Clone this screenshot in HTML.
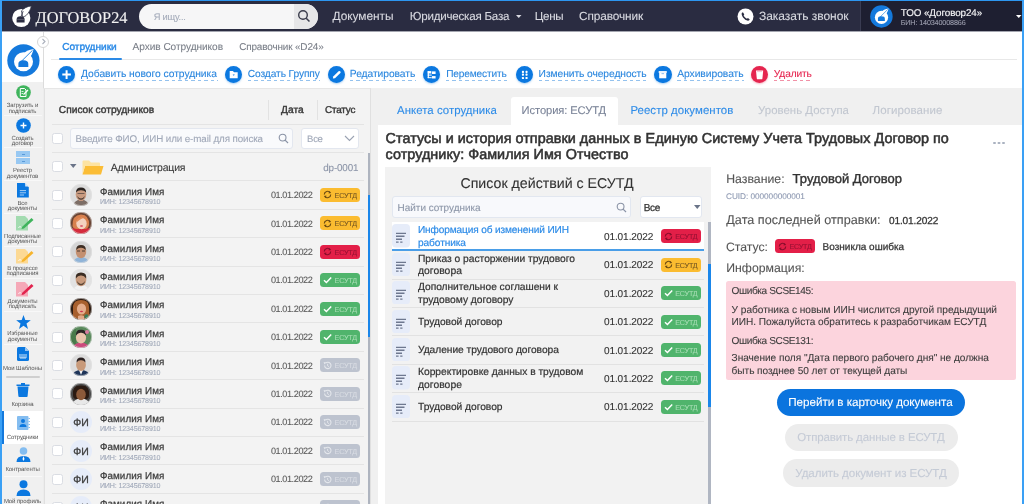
<!DOCTYPE html>
<html><head><meta charset="utf-8">
<style>
*{box-sizing:border-box;margin:0;padding:0}
html,body{width:1024px;height:504px;overflow:hidden;background:#fff}
body{font-family:"Liberation Sans",sans-serif;position:relative;color:#333}
.a{position:absolute}
.t{position:absolute;white-space:nowrap;line-height:1;text-rendering:geometricPrecision}
#w{position:absolute;left:0;top:0;width:1024px;height:504px;overflow:hidden;will-change:transform}
</style></head>
<body>
<div id="w">
<div class="a" style="left:0px;top:0px;width:1024px;height:31.5px;background:#2a2c41;"></div>
<div class="a" style="left:860px;top:0px;width:164px;height:31.5px;background:#1e1f31;border-left:1px solid #3a3c52;"></div>
<div class="a" style="left:0px;top:31px;width:1024px;height:1px;background:#a4a6b0;"></div>
<svg class="a" style="left:10px;top:4px" width="24" height="25" viewBox="0 0 24 25">
  <circle cx="11.3" cy="14" r="9.1" fill="#fff"/>
  <path d="M11.5 6.8 C14 4 17.5 2.2 21.4 1.9 C20.6 5.2 19.2 8.6 16.2 11.4 C15 12.4 13.6 12.8 12.6 12.8 Z" fill="#fff" stroke="#2a2c41" stroke-width="0.8"/>
  <path d="M11 12.6 L13.2 7.2" stroke="#2a2c41" stroke-width="0.8"/>
  <path d="M6.6 18.6 V15.4 Q6.6 12.2 10.6 12.2 Q14.6 12.2 14.6 15.4 V18.6 Z" fill="#2a2c41"/>
  <path d="M7.2 15.6 H14" stroke="#fff" stroke-width="0.4" opacity="0.5"/>
</svg>
<div class="t" style="left:35.60px;top:9.50px;font-size:16.38px;color:#f2f2f2;letter-spacing:-0.015px;font-family:'Liberation Serif',serif;-webkit-text-stroke-width:0.1px;">ДОГОВОР24</div>
<div class="a" style="left:139.4px;top:3.9px;width:178.6px;height:24.7px;border-radius:12.4px;background:#f6f6f7;overflow:hidden"><div class="a" style="left:155px;top:0;width:24px;height:25px;background:#e6e6e8"></div></div>
<div class="t" style="left:153.75px;top:13.00px;font-size:9.31px;color:#a6adbb;letter-spacing:-0.220px;-webkit-text-stroke-width:0.1px;">Я ищу...</div>
<svg class="a" style="left:297px;top:9px" width="14" height="14" viewBox="0 0 14 14">
  <circle cx="6" cy="6" r="4.3" fill="none" stroke="#3a3c4c" stroke-width="1.4"/>
  <path d="M9.2 9.2 L12.5 12.5" stroke="#3a3c4c" stroke-width="1.5"/>
</svg>
<div class="t" style="left:332.50px;top:11.40px;font-size:11.92px;color:#d9dae1;letter-spacing:-0.050px;-webkit-text-stroke-width:0.1px;">Документы</div>
<div class="t" style="left:409.80px;top:12.40px;font-size:11.59px;color:#d9dae1;letter-spacing:-0.225px;-webkit-text-stroke-width:0.1px;">Юридическая База</div>
<svg class="a" style="left:516px;top:14.5px" width="6" height="4"><path d="M0 0 L5.5 0 L2.75 3Z" fill="#d9dae1"/></svg>
<div class="t" style="left:534.70px;top:12.40px;font-size:11.59px;color:#d9dae1;letter-spacing:-0.263px;-webkit-text-stroke-width:0.1px;">Цены</div>
<div class="t" style="left:579.00px;top:11.40px;font-size:11.84px;color:#d9dae1;letter-spacing:-0.092px;-webkit-text-stroke-width:0.1px;">Справочник</div>
<svg class="a" style="left:737px;top:8px" width="17" height="17" viewBox="0 0 17 17">
  <circle cx="8.5" cy="8.5" r="8" fill="#fff"/>
  <path d="M5.2 4.6 C4.6 5.2 4.4 6.3 5.2 7.9 C6.1 9.8 7.8 11.5 9.6 12.3 C10.9 12.9 11.9 12.6 12.5 12 L12.6 11.3 L10.9 10.1 L10 10.8 C9 10.4 7.1 8.6 6.6 7.4 L7.3 6.5 L6.1 4.6 Z" fill="#2a2c41"/>
</svg>
<div class="t" style="left:759.00px;top:11.40px;font-size:11.97px;color:#d9dae1;letter-spacing:-0.014px;-webkit-text-stroke-width:0.1px;">Заказать звонок</div>
<svg class="a" style="left:870.3px;top:4.7px" width="23" height="23" viewBox="0 0 33 33">
  <circle cx="16.4" cy="16.4" r="16.1" fill="#1479dc"/>
  <circle cx="16.5" cy="17.8" r="9.5" fill="#fff"/>
  <path d="M15.5 10.5 C18 7.5 22 5.5 26.6 5 C25.8 8.5 24.5 12 21.5 15 C20 16.2 18.5 16.5 17.5 16.5 Z" fill="#fff"/>
  <path d="M14.2 17.5 L25.6 6.2" stroke="#1479dc" stroke-width="0.9"/>
  <path d="M11.4 22.9 V19.8 Q11.4 16.3 16.35 16.3 Q21.3 16.3 21.3 19.8 V22.9 Z" fill="#1479dc"/>
</svg>
<div class="t" style="left:900.70px;top:8.60px;font-size:9.85px;color:#f4f4f6;letter-spacing:-0.083px;-webkit-text-stroke-width:0.15000000000000002px;">ТОО «Договор24»</div>
<div class="t" style="left:900.70px;top:20.00px;font-size:7.18px;color:#9c9eae;letter-spacing:-0.116px;-webkit-text-stroke-width:0.1px;">БИН: 140340008866</div>
<svg class="a" style="left:1015.5px;top:15px" width="6" height="4"><path d="M0 0 L5.5 0 L2.75 3Z" fill="#fff"/></svg>
<div class="a" style="left:2px;top:32px;width:41px;height:472px;background:#f0f0f0;"></div>
<div class="a" style="left:2px;top:32px;width:41px;height:49.5px;background:#fff;"></div>
<div class="a" style="left:42.5px;top:32px;width:1px;height:472px;background:#dcdcdc;"></div>
<div class="a" style="left:37px;top:35.5px;width:12px;height:12px;border-radius:50%;background:#fff;border:1px solid #d6d6d6"></div>
<svg class="a" style="left:40.5px;top:38px" width="6" height="7"><path d="M1.5 1 L4 3.5 L1.5 6" fill="none" stroke="#aab0bc" stroke-width="1.1"/></svg>
<svg class="a" style="left:6.5px;top:43.5px" width="33" height="33" viewBox="0 0 33 33">
  <circle cx="16.4" cy="16.4" r="16.1" fill="#1479dc"/>
  <circle cx="16.5" cy="17.8" r="9.5" fill="#fff"/>
  <path d="M15.5 10.5 C18 7.5 22 5.5 26.6 5 C25.8 8.5 24.5 12 21.5 15 C20 16.2 18.5 16.5 17.5 16.5 Z" fill="#fff"/>
  <path d="M14.2 17.5 L25.6 6.2" stroke="#1479dc" stroke-width="0.9"/>
  <path d="M11.4 22.9 V19.8 Q11.4 16.3 16.35 16.3 Q21.3 16.3 21.3 19.8 V22.9 Z" fill="#1479dc"/>
</svg>
<svg class="a" style="left:15.5px;top:85px" width="15" height="15" viewBox="0 0 15 15"><circle cx="7.5" cy="7.5" r="7.3" fill="#3fb45c"/><path d="M4.3 3.5 H8.5 L10 5 V11.5 H4.3 Z" fill="none" stroke="#fff" stroke-width="1"/><path d="M7.5 9.5 L12 5" stroke="#fff" stroke-width="1.2"/><path d="M5.5 8.5 H7 M5.5 6.5 H7.5" stroke="#fff" stroke-width="0.8"/></svg>
<div class="t" style="left:2px;width:41px;text-align:center;top:102.9px;font-size:6px;color:#555;letter-spacing:-0.1px">Загрузить и</div>
<div class="t" style="left:2px;width:41px;text-align:center;top:108.5px;font-size:6px;color:#555;letter-spacing:-0.1px">подписать</div>
<div class="a" style="left:4px;top:114.5px;width:38px;height:1px;background:#f8f8f8"></div>
<svg class="a" style="left:15.8px;top:118.4px" width="15" height="15" viewBox="0 0 15 15"><circle cx="7.5" cy="7.5" r="7.3" fill="#0b78e0"/><path d="M7.5 4.5 V10.5 M4.5 7.5 H10.5" stroke="#fff" stroke-width="1.4"/></svg>
<div class="t" style="left:2px;width:41px;text-align:center;top:135.9px;font-size:6px;color:#555;letter-spacing:-0.1px">Создать</div>
<div class="t" style="left:2px;width:41px;text-align:center;top:141.1px;font-size:6px;color:#555;letter-spacing:-0.1px">договор</div>
<div class="a" style="left:4px;top:147px;width:38px;height:1px;background:#f8f8f8"></div>
<div class="a" style="left:16px;top:151px;width:14px;height:6.3px;background:#98c8f2;"></div>
<div class="a" style="left:16px;top:158.2px;width:14px;height:6.3px;background:#98c8f2;"></div>
<div class="a" style="left:21.5px;top:153.6px;width:3px;height:1px;background:#5a9ad8;"></div>
<div class="a" style="left:21.5px;top:160.8px;width:3px;height:1px;background:#5a9ad8;"></div>
<div class="t" style="left:2px;width:41px;text-align:center;top:168.2px;font-size:6px;color:#555;letter-spacing:-0.1px">Реестр</div>
<div class="t" style="left:2px;width:41px;text-align:center;top:173.7px;font-size:6px;color:#555;letter-spacing:-0.1px">документов</div>
<div class="a" style="left:4px;top:180px;width:38px;height:1px;background:#f8f8f8"></div>
<svg class="a" style="left:17px;top:183.4px" width="12" height="14.5" viewBox="0 0 12 14.5"><path d="M0 0 H7.6 L11.8 4.2 V14.5 H0 Z" fill="#0b78e0"/><path d="M8.2 0 L11.8 3.6 H8.2 Z" fill="#d6e8fa"/><path d="M2.8 7.6 H9 M2.8 9.8 H9 M2.8 12 H7" stroke="#cfe3f8" stroke-width="0.8" fill="none"/></svg>
<div class="t" style="left:2px;width:41px;text-align:center;top:200.9px;font-size:6px;color:#555;letter-spacing:-0.1px">Все</div>
<div class="t" style="left:2px;width:41px;text-align:center;top:206.4px;font-size:6px;color:#555;letter-spacing:-0.1px">документы</div>
<div class="a" style="left:4px;top:213px;width:38px;height:1px;background:#f8f8f8"></div>
<svg class="a" style="left:15.5px;top:216px" width="18" height="15" viewBox="0 0 18 15"><path d="M0 0 H9 L12 3 V14.5 H0 Z" fill="#a3dbb0"/><path d="M6 11 L15.5 2 L17.5 4 L8 12.5 L5.5 13 Z" fill="#3fb45c"/><path d="M2.5 12 C3.5 10 4.5 10 5 11.5" stroke="#fff" stroke-width="0.8" fill="none"/></svg>
<div class="t" style="left:2px;width:41px;text-align:center;top:233.9px;font-size:6px;color:#555;letter-spacing:-0.1px">Подписанные</div>
<div class="t" style="left:2px;width:41px;text-align:center;top:239.1px;font-size:6px;color:#555;letter-spacing:-0.1px">документы</div>
<div class="a" style="left:4px;top:246px;width:38px;height:1px;background:#f8f8f8"></div>
<svg class="a" style="left:15.5px;top:249px" width="18" height="15" viewBox="0 0 18 15"><path d="M0 0 H9 L12 3 V14.5 H0 Z" fill="#fcd994"/><path d="M6 11 L15.5 2 L17.5 4 L8 12.5 L5.5 13 Z" fill="#f6b42c"/><path d="M2.5 12 C3.5 10 4.5 10 5 11.5" stroke="#fff" stroke-width="0.8" fill="none"/></svg>
<div class="t" style="left:2px;width:41px;text-align:center;top:266.2px;font-size:6px;color:#555;letter-spacing:-0.1px">В процессе</div>
<div class="t" style="left:2px;width:41px;text-align:center;top:271.2px;font-size:6px;color:#555;letter-spacing:-0.1px">подписания</div>
<div class="a" style="left:4px;top:277.5px;width:38px;height:1px;background:#f8f8f8"></div>
<svg class="a" style="left:15.5px;top:281.5px" width="18" height="15" viewBox="0 0 18 15"><path d="M0 0 H9 L12 3 V14.5 H0 Z" fill="#f5a9b8"/><path d="M6 11 L15.5 2 L17.5 4 L8 12.5 L5.5 13 Z" fill="#e2244e"/><path d="M2.5 12 C3.5 10 4.5 10 5 11.5" stroke="#fff" stroke-width="0.8" fill="none"/></svg>
<div class="t" style="left:2px;width:41px;text-align:center;top:298.5px;font-size:6px;color:#555;letter-spacing:-0.1px">Документы</div>
<div class="t" style="left:2px;width:41px;text-align:center;top:304.1px;font-size:6px;color:#555;letter-spacing:-0.1px">подписать</div>
<div class="a" style="left:4px;top:310.5px;width:38px;height:1px;background:#f8f8f8"></div>
<svg class="a" style="left:15.5px;top:314.5px" width="15" height="14.5" viewBox="0 0 15 14.5"><path d="M7.5 0 L9.3 5 L14.8 5.2 L10.5 8.5 L12 14 L7.5 10.8 L3 14 L4.5 8.5 L0.2 5.2 L5.7 5 Z" fill="#0b78e0"/></svg>
<div class="t" style="left:2px;width:41px;text-align:center;top:331.3px;font-size:6px;color:#555;letter-spacing:-0.1px">Избранные</div>
<div class="t" style="left:2px;width:41px;text-align:center;top:336.9px;font-size:6px;color:#555;letter-spacing:-0.1px">документы</div>
<div class="a" style="left:4px;top:343.5px;width:38px;height:1px;background:#f8f8f8"></div>
<svg class="a" style="left:17px;top:347px" width="12" height="14" viewBox="0 0 12 14"><path d="M0 1.5 Q0 0 1.5 0 H8 L12 4 V12.5 Q12 14 10.5 14 H1.5 Q0 14 0 12.5 Z" fill="#0b78e0"/><path d="M8 0 V4 H12" fill="#9cc7f2"/><path d="M3 7 V11 H9 V7 M5 7 V11 M7 7 V11" stroke="#fff" stroke-width="0.8" fill="none"/></svg>
<div class="t" style="left:2px;width:41px;text-align:center;top:366.2px;font-size:6px;color:#555;letter-spacing:-0.1px">Мои Шаблоны</div>
<div class="a" style="left:6px;top:376px;width:34px;height:2px;background:#cfcfcf;border-radius:1px"></div>
<svg class="a" style="left:16px;top:382.5px" width="14" height="14" viewBox="0 0 14 14"><path d="M0.5 1.5 H13.5 V3 H0.5 Z M5 0 H9 V1.5 H5 Z" fill="#0b78e0"/><path d="M1.5 3.6 H12.5 L11.6 13.2 Q11.5 14 10.7 14 H3.3 Q2.5 14 2.4 13.2 Z" fill="#0b78e0"/></svg>
<div class="t" style="left:2px;width:41px;text-align:center;top:401.9px;font-size:6px;color:#555;letter-spacing:-0.1px">Корзина</div>
<div class="a" style="left:2px;top:410.7px;width:40.5px;height:33px;background:#fff;"></div>
<div class="a" style="left:2px;top:410.7px;width:2px;height:33px;background:#1479dc;"></div>
<svg class="a" style="left:17px;top:415.5px" width="14" height="14" viewBox="0 0 14 14"><rect x="0" y="0" width="11.5" height="14" rx="1" fill="#84bdf0"/><path d="M11.5 2.5 H13 M11.5 5.5 H13 M11.5 8.5 H13 M11.5 11.5 H13" stroke="#84bdf0" stroke-width="1.2"/><circle cx="6" cy="5" r="2" fill="#0b78e0"/><path d="M2.5 11 Q2.5 8 6 8 Q9.5 8 9.5 11 Z" fill="#0b78e0"/></svg>
<div class="t" style="left:2px;width:41px;text-align:center;top:434.5px;font-size:6px;color:#555;letter-spacing:-0.1px">Сотрудники</div>
<svg class="a" style="left:15.5px;top:446.5px" width="15" height="15" viewBox="0 0 15 15"><circle cx="7.5" cy="4" r="3.8" fill="#84bdf0"/><path d="M0.5 15 Q0.5 9 7.5 9 Q14.5 9 14.5 15 Z" fill="#0b78e0"/><path d="M7.5 9 L6.5 12 L7.5 14 L8.5 12 Z" fill="#fff"/></svg>
<div class="t" style="left:2px;width:41px;text-align:center;top:466.6px;font-size:6px;color:#555;letter-spacing:-0.1px">Контрагенты</div>
<div class="a" style="left:4px;top:475.5px;width:38px;height:1px;background:#f8f8f8"></div>
<svg class="a" style="left:15.5px;top:480px" width="15" height="16" viewBox="0 0 15 16"><circle cx="7.5" cy="4.2" r="4" fill="#0b78e0"/><path d="M0.5 16 Q0.5 9.5 7.5 9.5 Q14.5 9.5 14.5 16 Z" fill="#0b78e0"/></svg>
<div class="t" style="left:2px;width:41px;text-align:center;top:499.4px;font-size:6px;color:#555;letter-spacing:-0.1px">Мой профиль</div>
<div class="t" style="left:62.20px;top:43.00px;font-size:10.13px;color:#2b8ae6;letter-spacing:-0.037px;-webkit-text-stroke-width:0.4px;">Сотрудники</div>
<div class="t" style="left:132.60px;top:43.00px;font-size:10.11px;color:#7a7f88;letter-spacing:-0.050px;-webkit-text-stroke-width:0.1px;">Архив Сотрудников</div>
<div class="t" style="left:239.20px;top:43.00px;font-size:9.94px;color:#7a7f88;letter-spacing:-0.139px;-webkit-text-stroke-width:0.1px;">Справочник «D24»</div>
<div class="a" style="left:51px;top:59px;width:966px;height:1px;background:#e8e8e8;"></div>
<div class="a" style="left:58.5px;top:58.3px;width:63px;height:2px;background:#2b8ae6;border-radius:1px;"></div>
<div class="a" style="left:58.1px;top:65.7px;width:17.2px;height:17.2px;border-radius:50%;background:#0b78e0;box-shadow:0 1px 2px rgba(11,120,224,0.35)"></div>
<svg class="a" style="left:58.1px;top:65.7px" width="17.2" height="17.2" viewBox="0 0 17.2 17.2"><path d="M8.6 4.3 V12.9 M4.3 8.6 H12.9" stroke="#fff" stroke-width="2"/></svg>
<div class="t" style="left:81.00px;top:69.90px;font-size:10.32px;color:#2a86de;letter-spacing:-0.042px;-webkit-text-stroke-width:0.1px;">Добавить нового сотрудника</div>
<div class="a" style="left:81px;top:80px;width:136.5px;height:1px;background:repeating-linear-gradient(90deg,#2a86de 0 3.5px,transparent 3.5px 6.5px);opacity:0.5"></div>
<div class="a" style="left:225.2px;top:65.7px;width:17.2px;height:17.2px;border-radius:50%;background:#0b78e0;box-shadow:0 1px 2px rgba(11,120,224,0.35)"></div>
<svg class="a" style="left:225.2px;top:65.7px" width="17.2" height="17.2" viewBox="0 0 17.2 17.2"><path d="M4.7 5.1 H7.9 L9.1 6.3 H12.7 V12.3 H4.7 Z" fill="#fff"/><path d="M7.6 8.4 H9.8 L8.7 9.8 Z" fill="#0b78e0"/></svg>
<div class="t" style="left:247.80px;top:69.90px;font-size:10.21px;color:#2a86de;letter-spacing:-0.102px;-webkit-text-stroke-width:0.1px;">Создать Группу</div>
<div class="a" style="left:247.8px;top:80px;width:72.5px;height:1px;background:repeating-linear-gradient(90deg,#2a86de 0 3.5px,transparent 3.5px 6.5px);opacity:0.5"></div>
<div class="a" style="left:327.5px;top:65.7px;width:17.2px;height:17.2px;border-radius:50%;background:#0b78e0;box-shadow:0 1px 2px rgba(11,120,224,0.35)"></div>
<svg class="a" style="left:327.5px;top:65.7px" width="17.2" height="17.2" viewBox="0 0 17.2 17.2"><path d="M4.9 12.6 L5.2 10.6 L10.6 5.2 Q11.3 4.6 12 5.2 L12.4 5.6 Q13 6.3 12.4 7 L7 12.3 Z" fill="#fff"/></svg>
<div class="t" style="left:349.80px;top:69.90px;font-size:10.29px;color:#2a86de;letter-spacing:-0.062px;-webkit-text-stroke-width:0.1px;">Редатировать</div>
<div class="a" style="left:349.8px;top:80px;width:66.0px;height:1px;background:repeating-linear-gradient(90deg,#2a86de 0 3.5px,transparent 3.5px 6.5px);opacity:0.5"></div>
<div class="a" style="left:423.2px;top:65.7px;width:17.2px;height:17.2px;border-radius:50%;background:#0b78e0;box-shadow:0 1px 2px rgba(11,120,224,0.35)"></div>
<svg class="a" style="left:423.2px;top:65.7px" width="17.2" height="17.2" viewBox="0 0 17.2 17.2"><rect x="4.7" y="5.1" width="3.6" height="2.4" fill="#fff"/><rect x="4.7" y="5.1" width="1.2" height="7" fill="#fff"/><rect x="4.7" y="8.6" width="4" height="1" fill="#fff"/><rect x="4.7" y="11.2" width="4" height="1" fill="#fff"/><rect x="8.9" y="5.4" width="3.7" height="2.6" fill="#fff"/><rect x="8.9" y="10.1" width="3.7" height="2.4" fill="#fff"/></svg>
<div class="t" style="left:446.20px;top:69.90px;font-size:10.14px;color:#2a86de;letter-spacing:-0.148px;-webkit-text-stroke-width:0.1px;">Переместить</div>
<div class="a" style="left:446.2px;top:80px;width:61.0px;height:1px;background:repeating-linear-gradient(90deg,#2a86de 0 3.5px,transparent 3.5px 6.5px);opacity:0.5"></div>
<div class="a" style="left:515.6px;top:65.7px;width:17.2px;height:17.2px;border-radius:50%;background:#0b78e0;box-shadow:0 1px 2px rgba(11,120,224,0.35)"></div>
<svg class="a" style="left:515.6px;top:65.7px" width="17.2" height="17.2" viewBox="0 0 17.2 17.2"><rect x="5.9" y="4.8" width="2.1" height="2.1" rx="0.6" fill="#fff"/><rect x="5.9" y="7.6" width="2.1" height="2.1" rx="0.6" fill="#fff"/><rect x="5.9" y="10.9" width="2.1" height="2.1" rx="0.6" fill="#fff"/><rect x="9.5" y="4.8" width="2.1" height="2.1" rx="0.6" fill="#fff"/><rect x="9.5" y="7.6" width="2.1" height="2.1" rx="0.6" fill="#fff"/><rect x="9.5" y="10.9" width="2.1" height="2.1" rx="0.6" fill="#fff"/></svg>
<div class="t" style="left:538.60px;top:69.90px;font-size:10.26px;color:#2a86de;letter-spacing:-0.069px;-webkit-text-stroke-width:0.1px;">Изменить очередность</div>
<div class="a" style="left:538.6px;top:80px;width:108.5px;height:1px;background:repeating-linear-gradient(90deg,#2a86de 0 3.5px,transparent 3.5px 6.5px);opacity:0.5"></div>
<div class="a" style="left:654.4px;top:65.7px;width:17.2px;height:17.2px;border-radius:50%;background:#0b78e0;box-shadow:0 1px 2px rgba(11,120,224,0.35)"></div>
<svg class="a" style="left:654.4px;top:65.7px" width="17.2" height="17.2" viewBox="0 0 17.2 17.2"><rect x="4.7" y="5.1" width="8.1" height="1.8" fill="#fff"/><rect x="5.2" y="6.8" width="7.1" height="5.5" fill="#fff"/><rect x="7.5" y="7" width="2.6" height="1.2" fill="#9cc7f2"/></svg>
<div class="t" style="left:677.20px;top:69.90px;font-size:10.31px;color:#2a86de;letter-spacing:-0.048px;-webkit-text-stroke-width:0.1px;">Архивировать</div>
<div class="a" style="left:677.2px;top:80px;width:67.0px;height:1px;background:repeating-linear-gradient(90deg,#2a86de 0 3.5px,transparent 3.5px 6.5px);opacity:0.5"></div>
<div class="a" style="left:751.2px;top:65.7px;width:17.2px;height:17.2px;border-radius:50%;background:#e5254f;box-shadow:0 1px 2px rgba(229,37,79,0.35)"></div>
<svg class="a" style="left:751.2px;top:65.7px" width="17.2" height="17.2" viewBox="0 0 17.2 17.2"><path d="M5 4.4 H12.2 L11.4 12.7 Q11.3 13.3 10.6 13.3 H6.6 Q5.9 13.3 5.8 12.7 Z" fill="#fff"/><path d="M6 5.6 H11.2" stroke="#f7a8bb" stroke-width="0.7"/></svg>
<div class="t" style="left:773.80px;top:69.90px;font-size:10.18px;color:#e5254f;letter-spacing:-0.124px;-webkit-text-stroke-width:0.1px;">Удалить</div>
<div class="a" style="left:773.8px;top:80px;width:38.5px;height:1px;background:repeating-linear-gradient(90deg,#e5254f 0 3.5px,transparent 3.5px 6.5px);opacity:0.5"></div>
<div class="a" style="left:43px;top:88px;width:979px;height:416px;background:#ececec;"></div>
<div class="a" style="left:43.5px;top:88px;width:326px;height:416px;background:#f3f3f3;border-left:1px solid #e0e0e0;"></div>
<div class="a" style="left:43px;top:88px;width:979px;height:1px;background:#e6e6e6;"></div>
<div class="t" style="left:58.80px;top:106.40px;font-size:10.21px;color:#3a3a3a;-webkit-text-stroke-width:0.4px;">Список сотрудников</div>
<div class="a" style="left:267.5px;top:99.5px;width:1px;height:20px;background:#e2e2e2;"></div>
<div class="a" style="left:317px;top:99.5px;width:1px;height:20px;background:#e2e2e2;"></div>
<div class="t" style="left:281.10px;top:106.40px;font-size:10.18px;color:#3a3a3a;letter-spacing:-0.011px;-webkit-text-stroke-width:0.4px;">Дата</div>
<div class="t" style="left:324.90px;top:106.40px;font-size:9.92px;color:#3a3a3a;letter-spacing:-0.143px;-webkit-text-stroke-width:0.4px;">Статус</div>
<div class="a" style="left:51.5px;top:124px;width:312px;height:1px;background:#e4e4e4;"></div>
<div class="a" style="left:51.5px;top:133.0px;width:11px;height:11px;background:#fff;border:1px solid #dadde3;border-radius:2.5px"></div>
<div class="a" style="left:69.8px;top:127.5px;width:223.5px;height:21.5px;background:#f9fafc;border:1px solid #e3e7ef;border-radius:3px"></div>
<div class="t" style="left:75.50px;top:135.00px;font-size:9.8px;color:#a0a8b8;letter-spacing:-0.103px;-webkit-text-stroke-width:0.1px;">Введите ФИО, ИИН или e-mail для поиска</div>
<svg class="a" style="left:278px;top:133px" width="11" height="11" viewBox="0 0 11 11"><circle cx="4.6" cy="4.6" r="3.4" fill="none" stroke="#8a93a6" stroke-width="1.1"/><path d="M7.1 7.1 L10 10" stroke="#8a93a6" stroke-width="1.2"/></svg>
<div class="a" style="left:301.4px;top:127.5px;width:58px;height:21.5px;background:#fff;border:1px solid #e3e7ef;border-radius:3px"></div>
<div class="t" style="left:307.10px;top:135.00px;font-size:9.5px;color:#a0a8b8;letter-spacing:-0.290px;-webkit-text-stroke-width:0.1px;">Все</div>
<svg class="a" style="left:344px;top:135px" width="11" height="7"><path d="M1 1 L5.5 5.5 L10 1" fill="none" stroke="#9aa2b2" stroke-width="1.1"/></svg>
<div class="a" style="left:51.5px;top:152px;width:312px;height:1px;background:#e4e4e4;"></div>
<div class="a" style="left:51.5px;top:160.5px;width:11px;height:11px;background:#fff;border:1px solid #dadde3;border-radius:2.5px"></div>
<svg class="a" style="left:69.5px;top:164px" width="7" height="5"><path d="M0 0 H6.5 L3.25 4Z" fill="#6a7488"/></svg>
<svg class="a" style="left:82px;top:159.5px" width="22" height="15" viewBox="0 0 22 15"><path d="M0.5 1.5 Q0.5 0.5 1.5 0.5 H7 L9 2.5 H17 Q18 2.5 18 3.5 V6 H0.5 Z" fill="#fde3a2"/><path d="M0.5 14.5 L3 6 H21.5 L19 14.5 Z" fill="#fbbd36"/><path d="M0.5 6 V14.5 L3 6 Z" fill="#fde3a2"/></svg>
<div class="t" style="left:110.80px;top:163.90px;font-size:10.47px;color:#3a3a3a;letter-spacing:-0.189px;-webkit-text-stroke-width:0.1px;">Администрация</div>
<div class="t" style="left:323.30px;top:163.90px;font-size:9.87px;color:#8c95a8;letter-spacing:-0.175px;-webkit-text-stroke-width:0.1px;">dp-0001</div>
<div class="a" style="left:51.5px;top:180.4px;width:312px;height:1px;background:#e4e4e4;"></div>
<div class="a" style="left:368px;top:152.7px;width:3px;height:352px;background:#aeb4bf;"></div>
<div class="a" style="left:368px;top:194.6px;width:3px;height:142.2px;background:#1a86ea;"></div>
<div class="a" style="left:51.5px;top:189.5px;width:11px;height:11px;background:#fff;border:1px solid #dadde3;border-radius:2.5px"></div>
<svg class="a" style="left:70px;top:184.0px" width="22" height="22" viewBox="0 0 22 22"><defs><clipPath id="av0"><circle cx="11" cy="11" r="11"/></clipPath></defs><g clip-path="url(#av0)"><rect width="22" height="22" fill="#dcdcdc"/><path d="M3 22 Q4 16 11 15.5 Q18 16 19 22Z" fill="#7d6e66"/><rect x="9" y="13" width="4" height="4" fill="#c09078"/><ellipse cx="11" cy="10.5" rx="5.3" ry="6.3" fill="#c99b80"/><path d="M6 8.5 Q6 3.5 11 3.5 Q16 3.5 16.2 8.5 Q14 6 11 6.2 Q8 6 6 8.5Z" fill="#2a2320"/><path d="M7.2 12 Q11 17 14.8 12 Q14 15.5 11 15.8 Q8 15.5 7.2 12Z" fill="#4a3a32"/><rect x="7.5" y="9" width="7" height="1" fill="#3a3030" opacity="0.6"/></g><circle cx="11" cy="11" r="10.7" fill="none" stroke="#e6e6e6" stroke-width="0.6"/></svg>
<div class="t" style="left:99.90px;top:187.80px;font-size:9.83px;color:#3d3d3d;letter-spacing:0.080px;-webkit-text-stroke-width:0.25px;">Фамилия Имя</div>
<div class="t" style="left:99.90px;top:199.20px;font-size:7.12px;color:#a3abbb;letter-spacing:-0.150px;-webkit-text-stroke-width:0.1px;">ИИН: 12345678910</div>
<div class="t" style="left:270.90px;top:191.10px;font-size:9.1px;color:#5c5c5c;letter-spacing:-0.405px;-webkit-text-stroke-width:0.1px;">01.01.2022</div>
<div class="a" style="left:320.4px;top:187.9px;width:39.6px;height:14.2px;background:#fbbc30;border-radius:3.5px"><svg class="a" style="left:2.8px;top:2.6px" width="9" height="9" viewBox="0 0 9 9"><path d="M1.3 4.6 A3.3 3.3 0 0 1 7.3 2.7 M7.7 4.4 A3.3 3.3 0 0 1 1.7 6.3" fill="none" stroke="#6e4c12" stroke-width="1.2"/><path d="M6 0.9 L8.2 2.9 L5.6 3.6Z M3 8.1 L0.8 6.1 L3.4 5.4Z" fill="#6e4c12"/></svg><div class="t" style="left:14.20px;top:4.20px;font-size:7.2px;color:#7a5a22;letter-spacing:-0.194px;-webkit-text-stroke-width:0.1px;">ЕСУТД</div>
</div>
<div class="a" style="left:51.5px;top:208.8px;width:312px;height:1px;background:#e4e4e4;"></div>
<div class="a" style="left:51.5px;top:217.9px;width:11px;height:11px;background:#fff;border:1px solid #dadde3;border-radius:2.5px"></div>
<svg class="a" style="left:70px;top:212.4px" width="22" height="22" viewBox="0 0 22 22"><defs><clipPath id="av1"><circle cx="11" cy="11" r="11"/></clipPath></defs><g clip-path="url(#av1)"><rect width="22" height="22" fill="#6a4434"/><path d="M0 22 L0 17 Q5 15.5 11 16 Q17 15.5 22 17 V22Z" fill="#d42a3c"/><path d="M2.5 14 Q2 3 11 2.5 Q19.5 3 19 13 Q18 17 15 17 L7 17 Q3 17 2.5 14Z" fill="#d8804e"/><ellipse cx="11.5" cy="11.5" rx="5.2" ry="5.8" fill="#f4d2c0"/><ellipse cx="11.5" cy="14" rx="1.6" ry="0.7" fill="#d8405a"/><path d="M6.5 8 Q9 4.5 15 6 Q12 5.5 7 10Z" fill="#e08a58"/></g><circle cx="11" cy="11" r="10.7" fill="none" stroke="#e6e6e6" stroke-width="0.6"/></svg>
<div class="t" style="left:99.90px;top:216.20px;font-size:9.83px;color:#3d3d3d;letter-spacing:0.080px;-webkit-text-stroke-width:0.25px;">Фамилия Имя</div>
<div class="t" style="left:99.90px;top:227.60px;font-size:7.12px;color:#a3abbb;letter-spacing:-0.150px;-webkit-text-stroke-width:0.1px;">ИИН: 12345678910</div>
<div class="t" style="left:270.90px;top:219.50px;font-size:9.1px;color:#5c5c5c;letter-spacing:-0.405px;-webkit-text-stroke-width:0.1px;">01.01.2022</div>
<div class="a" style="left:320.4px;top:216.3px;width:39.6px;height:14.2px;background:#fbbc30;border-radius:3.5px"><svg class="a" style="left:2.8px;top:2.6px" width="9" height="9" viewBox="0 0 9 9"><path d="M1.3 4.6 A3.3 3.3 0 0 1 7.3 2.7 M7.7 4.4 A3.3 3.3 0 0 1 1.7 6.3" fill="none" stroke="#6e4c12" stroke-width="1.2"/><path d="M6 0.9 L8.2 2.9 L5.6 3.6Z M3 8.1 L0.8 6.1 L3.4 5.4Z" fill="#6e4c12"/></svg><div class="t" style="left:14.20px;top:4.20px;font-size:7.2px;color:#7a5a22;letter-spacing:-0.194px;-webkit-text-stroke-width:0.1px;">ЕСУТД</div>
</div>
<div class="a" style="left:51.5px;top:237.2px;width:312px;height:1px;background:#e4e4e4;"></div>
<div class="a" style="left:51.5px;top:246.3px;width:11px;height:11px;background:#fff;border:1px solid #dadde3;border-radius:2.5px"></div>
<svg class="a" style="left:70px;top:240.8px" width="22" height="22" viewBox="0 0 22 22"><defs><clipPath id="av2"><circle cx="11" cy="11" r="11"/></clipPath></defs><g clip-path="url(#av2)"><rect width="22" height="22" fill="#d4d4d4"/><path d="M3 22 Q4 16.5 11 16 Q18 16.5 19 22Z" fill="#90b4d8"/><ellipse cx="11" cy="11" rx="5.2" ry="6.2" fill="#c49070"/><path d="M6.2 9 Q6 4 11 4 Q16 4 15.8 9 Q13 6.5 11 6.8 Q8.5 6.5 6.2 9Z" fill="#3e2e24"/><path d="M7 10 H10 M12 10 H15" stroke="#4a3a30" stroke-width="1"/></g><circle cx="11" cy="11" r="10.7" fill="none" stroke="#e6e6e6" stroke-width="0.6"/></svg>
<div class="t" style="left:99.90px;top:244.60px;font-size:9.83px;color:#3d3d3d;letter-spacing:0.080px;-webkit-text-stroke-width:0.25px;">Фамилия Имя</div>
<div class="t" style="left:99.90px;top:256.00px;font-size:7.12px;color:#a3abbb;letter-spacing:-0.150px;-webkit-text-stroke-width:0.1px;">ИИН: 12345678910</div>
<div class="t" style="left:270.90px;top:247.90px;font-size:9.1px;color:#5c5c5c;letter-spacing:-0.405px;-webkit-text-stroke-width:0.1px;">01.01.2022</div>
<div class="a" style="left:320.4px;top:244.7px;width:39.6px;height:14.2px;background:#e31f48;border-radius:3.5px"><svg class="a" style="left:2.8px;top:2.6px" width="9" height="9" viewBox="0 0 9 9"><path d="M1.3 4.6 A3.3 3.3 0 0 1 7.3 2.7 M7.7 4.4 A3.3 3.3 0 0 1 1.7 6.3" fill="none" stroke="#8a0e2c" stroke-width="1.2"/><path d="M6 0.9 L8.2 2.9 L5.6 3.6Z M3 8.1 L0.8 6.1 L3.4 5.4Z" fill="#8a0e2c"/></svg><div class="t" style="left:14.20px;top:4.20px;font-size:7.2px;color:#9a1234;letter-spacing:-0.194px;-webkit-text-stroke-width:0.1px;">ЕСУТД</div>
</div>
<div class="a" style="left:51.5px;top:265.6px;width:312px;height:1px;background:#e4e4e4;"></div>
<div class="a" style="left:51.5px;top:274.7px;width:11px;height:11px;background:#fff;border:1px solid #dadde3;border-radius:2.5px"></div>
<svg class="a" style="left:70px;top:269.2px" width="22" height="22" viewBox="0 0 22 22"><defs><clipPath id="av3"><circle cx="11" cy="11" r="11"/></clipPath></defs><g clip-path="url(#av3)"><rect width="22" height="22" fill="#e2e2e2"/><path d="M3 22 Q4 16.5 11 16 Q18 16.5 19 22Z" fill="#f2f2f2"/><ellipse cx="11" cy="11" rx="5.3" ry="6.2" fill="#c89a7c"/><path d="M5.8 9.5 Q5 3.5 11 3.5 Q17 3.5 16.2 9.5 Q14 6.2 11 6.5 Q8 6.2 5.8 9.5Z" fill="#3a2c22"/><path d="M7 12 Q11 18 15 12 Q14.5 16 11 16.3 Q7.5 16 7 12Z" fill="#5a4636"/></g><circle cx="11" cy="11" r="10.7" fill="none" stroke="#e6e6e6" stroke-width="0.6"/></svg>
<div class="t" style="left:99.90px;top:273.00px;font-size:9.83px;color:#3d3d3d;letter-spacing:0.080px;-webkit-text-stroke-width:0.25px;">Фамилия Имя</div>
<div class="t" style="left:99.90px;top:284.40px;font-size:7.12px;color:#a3abbb;letter-spacing:-0.150px;-webkit-text-stroke-width:0.1px;">ИИН: 12345678910</div>
<div class="t" style="left:270.90px;top:276.30px;font-size:9.1px;color:#5c5c5c;letter-spacing:-0.405px;-webkit-text-stroke-width:0.1px;">01.01.2022</div>
<div class="a" style="left:320.4px;top:273.1px;width:39.6px;height:14.2px;background:#50b46c;border-radius:3.5px"><svg class="a" style="left:3px;top:3px" width="9" height="8" viewBox="0 0 9 8"><path d="M1 4.3 L3.4 6.5 L8.2 1.6" fill="none" stroke="#fff" stroke-width="1.5"/></svg><div class="t" style="left:14.20px;top:4.20px;font-size:7.2px;color:#a4dcb2;letter-spacing:-0.194px;-webkit-text-stroke-width:0.1px;">ЕСУТД</div>
</div>
<div class="a" style="left:51.5px;top:294.0px;width:312px;height:1px;background:#e4e4e4;"></div>
<div class="a" style="left:51.5px;top:303.1px;width:11px;height:11px;background:#fff;border:1px solid #dadde3;border-radius:2.5px"></div>
<svg class="a" style="left:70px;top:297.6px" width="22" height="22" viewBox="0 0 22 22"><defs><clipPath id="av4"><circle cx="11" cy="11" r="11"/></clipPath></defs><g clip-path="url(#av4)"><rect width="22" height="22" fill="#2e1c12"/><path d="M3 8 Q4 2 11 2 Q19 2 19 9 L19.5 20 Q15 22 11 21 L3 20Z" fill="#a8602e"/><ellipse cx="11.5" cy="11" rx="4.6" ry="5.6" fill="#e4ad8c"/><ellipse cx="11.5" cy="13.5" rx="1.5" ry="0.7" fill="#d03050"/><path d="M8 18 Q11 16.5 14 18 L14 22 L8 22Z" fill="#e0a888"/><circle cx="16.5" cy="18.5" r="2.2" fill="#3a7a5a"/></g><circle cx="11" cy="11" r="10.7" fill="none" stroke="#e6e6e6" stroke-width="0.6"/></svg>
<div class="t" style="left:99.90px;top:301.40px;font-size:9.83px;color:#3d3d3d;letter-spacing:0.080px;-webkit-text-stroke-width:0.25px;">Фамилия Имя</div>
<div class="t" style="left:99.90px;top:312.80px;font-size:7.12px;color:#a3abbb;letter-spacing:-0.150px;-webkit-text-stroke-width:0.1px;">ИИН: 12345678910</div>
<div class="t" style="left:270.90px;top:304.70px;font-size:9.1px;color:#5c5c5c;letter-spacing:-0.405px;-webkit-text-stroke-width:0.1px;">01.01.2022</div>
<div class="a" style="left:320.4px;top:301.5px;width:39.6px;height:14.2px;background:#50b46c;border-radius:3.5px"><svg class="a" style="left:3px;top:3px" width="9" height="8" viewBox="0 0 9 8"><path d="M1 4.3 L3.4 6.5 L8.2 1.6" fill="none" stroke="#fff" stroke-width="1.5"/></svg><div class="t" style="left:14.20px;top:4.20px;font-size:7.2px;color:#a4dcb2;letter-spacing:-0.194px;-webkit-text-stroke-width:0.1px;">ЕСУТД</div>
</div>
<div class="a" style="left:51.5px;top:322.4px;width:312px;height:1px;background:#e4e4e4;"></div>
<div class="a" style="left:51.5px;top:331.5px;width:11px;height:11px;background:#fff;border:1px solid #dadde3;border-radius:2.5px"></div>
<svg class="a" style="left:70px;top:326.0px" width="22" height="22" viewBox="0 0 22 22"><defs><clipPath id="av5"><circle cx="11" cy="11" r="11"/></clipPath></defs><g clip-path="url(#av5)"><rect width="22" height="22" fill="#5a8a5c"/><rect x="0" y="0" width="6" height="22" fill="#487a4a"/><path d="M2 22 Q4 17 11 16.5 Q18 17 20 22Z" fill="#cc4a7c"/><ellipse cx="11" cy="11.5" rx="5.1" ry="6" fill="#e8c4ac"/><path d="M6 9.5 Q5.5 3.5 11 3.8 Q16.5 3.5 16 9.5 Q14 6.5 11 6.8 Q8 6.5 6 9.5Z" fill="#2a2626"/><circle cx="17" cy="6" r="2" fill="#d87aa0"/></g><circle cx="11" cy="11" r="10.7" fill="none" stroke="#e6e6e6" stroke-width="0.6"/></svg>
<div class="t" style="left:99.90px;top:329.80px;font-size:9.83px;color:#3d3d3d;letter-spacing:0.080px;-webkit-text-stroke-width:0.25px;">Фамилия Имя</div>
<div class="t" style="left:99.90px;top:341.20px;font-size:7.12px;color:#a3abbb;letter-spacing:-0.150px;-webkit-text-stroke-width:0.1px;">ИИН: 12345678910</div>
<div class="t" style="left:270.90px;top:333.10px;font-size:9.1px;color:#5c5c5c;letter-spacing:-0.405px;-webkit-text-stroke-width:0.1px;">01.01.2022</div>
<div class="a" style="left:320.4px;top:329.9px;width:39.6px;height:14.2px;background:#50b46c;border-radius:3.5px"><svg class="a" style="left:3px;top:3px" width="9" height="8" viewBox="0 0 9 8"><path d="M1 4.3 L3.4 6.5 L8.2 1.6" fill="none" stroke="#fff" stroke-width="1.5"/></svg><div class="t" style="left:14.20px;top:4.20px;font-size:7.2px;color:#a4dcb2;letter-spacing:-0.194px;-webkit-text-stroke-width:0.1px;">ЕСУТД</div>
</div>
<div class="a" style="left:51.5px;top:350.8px;width:312px;height:1px;background:#e4e4e4;"></div>
<div class="a" style="left:51.5px;top:359.9px;width:11px;height:11px;background:#fff;border:1px solid #dadde3;border-radius:2.5px"></div>
<svg class="a" style="left:70px;top:354.4px" width="22" height="22" viewBox="0 0 22 22"><defs><clipPath id="av6"><circle cx="11" cy="11" r="11"/></clipPath></defs><g clip-path="url(#av6)"><rect width="22" height="22" fill="#dcdcdc"/><path d="M2 22 Q3 16.5 11 16 Q19 16.5 20 22Z" fill="#1e3458"/><path d="M9 16 L11 21 L13 16Z" fill="#f4f4f4"/><ellipse cx="11" cy="11" rx="4.9" ry="6" fill="#c89a7a"/><path d="M6.5 8.5 Q6.5 3.5 11 3.5 Q15.5 3.5 15.5 8.5 Q13.5 6 11 6.3 Q8.5 6 6.5 8.5Z" fill="#2a2020"/></g><circle cx="11" cy="11" r="10.7" fill="none" stroke="#e6e6e6" stroke-width="0.6"/></svg>
<div class="t" style="left:99.90px;top:358.20px;font-size:9.83px;color:#3d3d3d;letter-spacing:0.080px;-webkit-text-stroke-width:0.25px;">Фамилия Имя</div>
<div class="t" style="left:99.90px;top:369.60px;font-size:7.12px;color:#a3abbb;letter-spacing:-0.150px;-webkit-text-stroke-width:0.1px;">ИИН: 12345678910</div>
<div class="t" style="left:270.90px;top:361.50px;font-size:9.1px;color:#5c5c5c;letter-spacing:-0.405px;-webkit-text-stroke-width:0.1px;">01.01.2022</div>
<div class="a" style="left:320.4px;top:358.3px;width:39.6px;height:14.2px;background:#bdc3cf;border-radius:3.5px"><svg class="a" style="left:3px;top:2.8px" width="9" height="9" viewBox="0 0 9 9"><path d="M1.6 4.5 A3.2 3.2 0 1 0 2.5 2.2" fill="none" stroke="#e4e7ec" stroke-width="1.1"/><path d="M0.6 1 L3.2 1.6 L1.4 3.6Z" fill="#e4e7ec"/><path d="M4.6 2.8 V4.8 L5.9 5.7" fill="none" stroke="#e4e7ec" stroke-width="0.9"/></svg><div class="t" style="left:14.20px;top:4.20px;font-size:7.2px;color:#d8dce3;letter-spacing:-0.194px;-webkit-text-stroke-width:0.1px;">ЕСУТД</div>
</div>
<div class="a" style="left:51.5px;top:379.2px;width:312px;height:1px;background:#e4e4e4;"></div>
<div class="a" style="left:51.5px;top:388.3px;width:11px;height:11px;background:#fff;border:1px solid #dadde3;border-radius:2.5px"></div>
<svg class="a" style="left:70px;top:382.8px" width="22" height="22" viewBox="0 0 22 22"><defs><clipPath id="av7"><circle cx="11" cy="11" r="11"/></clipPath></defs><g clip-path="url(#av7)"><rect width="22" height="22" fill="#4a4a4a"/><path d="M2 22 Q3 16 11 15.5 Q19 16 20 22Z" fill="#e8e8e8"/><path d="M3 12 Q2 2 11 2.5 Q20 2 19 12 Q19 16 16 16 L6 16 Q3 16 3 12Z" fill="#2a1a12"/><ellipse cx="11" cy="11.5" rx="4.8" ry="5.8" fill="#8c5a3a"/></g><circle cx="11" cy="11" r="10.7" fill="none" stroke="#e6e6e6" stroke-width="0.6"/></svg>
<div class="t" style="left:99.90px;top:386.60px;font-size:9.83px;color:#3d3d3d;letter-spacing:0.080px;-webkit-text-stroke-width:0.25px;">Фамилия Имя</div>
<div class="t" style="left:99.90px;top:398.00px;font-size:7.12px;color:#a3abbb;letter-spacing:-0.150px;-webkit-text-stroke-width:0.1px;">ИИН: 12345678910</div>
<div class="t" style="left:270.90px;top:389.90px;font-size:9.1px;color:#5c5c5c;letter-spacing:-0.405px;-webkit-text-stroke-width:0.1px;">01.01.2022</div>
<div class="a" style="left:320.4px;top:386.7px;width:39.6px;height:14.2px;background:#bdc3cf;border-radius:3.5px"><svg class="a" style="left:3px;top:2.8px" width="9" height="9" viewBox="0 0 9 9"><path d="M1.6 4.5 A3.2 3.2 0 1 0 2.5 2.2" fill="none" stroke="#e4e7ec" stroke-width="1.1"/><path d="M0.6 1 L3.2 1.6 L1.4 3.6Z" fill="#e4e7ec"/><path d="M4.6 2.8 V4.8 L5.9 5.7" fill="none" stroke="#e4e7ec" stroke-width="0.9"/></svg><div class="t" style="left:14.20px;top:4.20px;font-size:7.2px;color:#d8dce3;letter-spacing:-0.194px;-webkit-text-stroke-width:0.1px;">ЕСУТД</div>
</div>
<div class="a" style="left:51.5px;top:407.6px;width:312px;height:1px;background:#e4e4e4;"></div>
<div class="a" style="left:51.5px;top:416.7px;width:11px;height:11px;background:#fff;border:1px solid #dadde3;border-radius:2.5px"></div>
<div class="a" style="left:70px;top:411.2px;width:22px;height:22px;border-radius:50%;background:#e6ecf9"></div>
<div class="t" style="left:73.30px;top:419.10px;font-size:10.49px;color:#3d3d3d;letter-spacing:-0.007px;-webkit-text-stroke-width:0.30000000000000004px;">ФИ</div>
<div class="t" style="left:99.90px;top:415.00px;font-size:9.83px;color:#3d3d3d;letter-spacing:0.080px;-webkit-text-stroke-width:0.25px;">Фамилия Имя</div>
<div class="t" style="left:99.90px;top:426.40px;font-size:7.12px;color:#a3abbb;letter-spacing:-0.150px;-webkit-text-stroke-width:0.1px;">ИИН: 12345678910</div>
<div class="t" style="left:270.90px;top:418.30px;font-size:9.1px;color:#5c5c5c;letter-spacing:-0.405px;-webkit-text-stroke-width:0.1px;">01.01.2022</div>
<div class="a" style="left:320.4px;top:415.1px;width:39.6px;height:14.2px;background:#bdc3cf;border-radius:3.5px"><svg class="a" style="left:3px;top:2.8px" width="9" height="9" viewBox="0 0 9 9"><path d="M1.6 4.5 A3.2 3.2 0 1 0 2.5 2.2" fill="none" stroke="#e4e7ec" stroke-width="1.1"/><path d="M0.6 1 L3.2 1.6 L1.4 3.6Z" fill="#e4e7ec"/><path d="M4.6 2.8 V4.8 L5.9 5.7" fill="none" stroke="#e4e7ec" stroke-width="0.9"/></svg><div class="t" style="left:14.20px;top:4.20px;font-size:7.2px;color:#d8dce3;letter-spacing:-0.194px;-webkit-text-stroke-width:0.1px;">ЕСУТД</div>
</div>
<div class="a" style="left:51.5px;top:436.0px;width:312px;height:1px;background:#e4e4e4;"></div>
<div class="a" style="left:51.5px;top:445.1px;width:11px;height:11px;background:#fff;border:1px solid #dadde3;border-radius:2.5px"></div>
<div class="a" style="left:70px;top:439.6px;width:22px;height:22px;border-radius:50%;background:#e6ecf9"></div>
<div class="t" style="left:73.30px;top:447.50px;font-size:10.49px;color:#3d3d3d;letter-spacing:-0.007px;-webkit-text-stroke-width:0.30000000000000004px;">ФИ</div>
<div class="t" style="left:99.90px;top:443.40px;font-size:9.83px;color:#3d3d3d;letter-spacing:0.080px;-webkit-text-stroke-width:0.25px;">Фамилия Имя</div>
<div class="t" style="left:99.90px;top:454.80px;font-size:7.12px;color:#a3abbb;letter-spacing:-0.150px;-webkit-text-stroke-width:0.1px;">ИИН: 12345678910</div>
<div class="t" style="left:270.90px;top:446.70px;font-size:9.1px;color:#5c5c5c;letter-spacing:-0.405px;-webkit-text-stroke-width:0.1px;">01.01.2022</div>
<div class="a" style="left:320.4px;top:443.5px;width:39.6px;height:14.2px;background:#bdc3cf;border-radius:3.5px"><svg class="a" style="left:3px;top:2.8px" width="9" height="9" viewBox="0 0 9 9"><path d="M1.6 4.5 A3.2 3.2 0 1 0 2.5 2.2" fill="none" stroke="#e4e7ec" stroke-width="1.1"/><path d="M0.6 1 L3.2 1.6 L1.4 3.6Z" fill="#e4e7ec"/><path d="M4.6 2.8 V4.8 L5.9 5.7" fill="none" stroke="#e4e7ec" stroke-width="0.9"/></svg><div class="t" style="left:14.20px;top:4.20px;font-size:7.2px;color:#d8dce3;letter-spacing:-0.194px;-webkit-text-stroke-width:0.1px;">ЕСУТД</div>
</div>
<div class="a" style="left:51.5px;top:464.4px;width:312px;height:1px;background:#e4e4e4;"></div>
<div class="a" style="left:51.5px;top:473.5px;width:11px;height:11px;background:#fff;border:1px solid #dadde3;border-radius:2.5px"></div>
<div class="a" style="left:70px;top:468.0px;width:22px;height:22px;border-radius:50%;background:#e6ecf9"></div>
<div class="t" style="left:73.30px;top:475.90px;font-size:10.49px;color:#3d3d3d;letter-spacing:-0.007px;-webkit-text-stroke-width:0.30000000000000004px;">ФИ</div>
<div class="t" style="left:99.90px;top:471.80px;font-size:9.83px;color:#3d3d3d;letter-spacing:0.080px;-webkit-text-stroke-width:0.25px;">Фамилия Имя</div>
<div class="t" style="left:99.90px;top:483.20px;font-size:7.12px;color:#a3abbb;letter-spacing:-0.150px;-webkit-text-stroke-width:0.1px;">ИИН: 12345678910</div>
<div class="t" style="left:270.90px;top:475.10px;font-size:9.1px;color:#5c5c5c;letter-spacing:-0.405px;-webkit-text-stroke-width:0.1px;">01.01.2022</div>
<div class="a" style="left:320.4px;top:471.9px;width:39.6px;height:14.2px;background:#bdc3cf;border-radius:3.5px"><svg class="a" style="left:3px;top:2.8px" width="9" height="9" viewBox="0 0 9 9"><path d="M1.6 4.5 A3.2 3.2 0 1 0 2.5 2.2" fill="none" stroke="#e4e7ec" stroke-width="1.1"/><path d="M0.6 1 L3.2 1.6 L1.4 3.6Z" fill="#e4e7ec"/><path d="M4.6 2.8 V4.8 L5.9 5.7" fill="none" stroke="#e4e7ec" stroke-width="0.9"/></svg><div class="t" style="left:14.20px;top:4.20px;font-size:7.2px;color:#d8dce3;letter-spacing:-0.194px;-webkit-text-stroke-width:0.1px;">ЕСУТД</div>
</div>
<div class="a" style="left:51.5px;top:492.8px;width:312px;height:1px;background:#e4e4e4;"></div>
<div class="a" style="left:51.5px;top:501.9px;width:11px;height:11px;background:#fff;border:1px solid #dadde3;border-radius:2.5px"></div>
<div class="a" style="left:70px;top:496.4px;width:22px;height:22px;border-radius:50%;background:#e6ecf9"></div>
<div class="t" style="left:73.30px;top:504.30px;font-size:10.49px;color:#3d3d3d;letter-spacing:-0.007px;-webkit-text-stroke-width:0.30000000000000004px;">ФИ</div>
<div class="t" style="left:99.90px;top:500.20px;font-size:9.83px;color:#3d3d3d;letter-spacing:0.080px;-webkit-text-stroke-width:0.25px;">Фамилия Имя</div>
<div class="t" style="left:99.90px;top:511.60px;font-size:7.12px;color:#a3abbb;letter-spacing:-0.150px;-webkit-text-stroke-width:0.1px;">ИИН: 12345678910</div>
<div class="t" style="left:270.90px;top:503.50px;font-size:9.1px;color:#5c5c5c;letter-spacing:-0.405px;-webkit-text-stroke-width:0.1px;">01.01.2022</div>
<div class="a" style="left:320.4px;top:500.3px;width:39.6px;height:14.2px;background:#bdc3cf;border-radius:3.5px"><svg class="a" style="left:3px;top:2.8px" width="9" height="9" viewBox="0 0 9 9"><path d="M1.6 4.5 A3.2 3.2 0 1 0 2.5 2.2" fill="none" stroke="#e4e7ec" stroke-width="1.1"/><path d="M0.6 1 L3.2 1.6 L1.4 3.6Z" fill="#e4e7ec"/><path d="M4.6 2.8 V4.8 L5.9 5.7" fill="none" stroke="#e4e7ec" stroke-width="0.9"/></svg><div class="t" style="left:14.20px;top:4.20px;font-size:7.2px;color:#d8dce3;letter-spacing:-0.194px;-webkit-text-stroke-width:0.1px;">ЕСУТД</div>
</div>
<div class="a" style="left:51.5px;top:521.2px;width:312px;height:1px;background:#e4e4e4;"></div>
<div class="a" style="left:370px;top:88px;width:652px;height:416px;background:#f0f0f0;"></div>
<div class="a" style="left:369.5px;top:88px;width:1px;height:416px;background:#e0e0e0;"></div>
<div class="a" style="left:510.8px;top:96.6px;width:107.5px;height:29px;background:#fff;border-radius:3px 3px 0 0;"></div>
<div class="t" style="left:397.00px;top:106.20px;font-size:11.4px;color:#2e8ce8;letter-spacing:0.050px;-webkit-text-stroke-width:0.1px;">Анкета сотрудника</div>
<div class="t" style="left:521.60px;top:106.00px;font-size:11.15px;color:#7b8498;letter-spacing:-0.081px;-webkit-text-stroke-width:0.1px;">История: ЕСУТД</div>
<div class="t" style="left:630.40px;top:106.20px;font-size:11.41px;color:#2e8ce8;letter-spacing:0.062px;-webkit-text-stroke-width:0.1px;">Реестр документов</div>
<div class="t" style="left:758.00px;top:106.20px;font-size:11.38px;color:#c2c7d0;letter-spacing:0.042px;-webkit-text-stroke-width:0.1px;">Уровень Доступа</div>
<div class="t" style="left:872.60px;top:106.20px;font-size:11.49px;color:#c2c7d0;letter-spacing:0.105px;-webkit-text-stroke-width:0.1px;">Логирование</div>
<div class="a" style="left:378px;top:125px;width:644px;height:379px;background:#fff;"></div>
<div class="t" style="left:385.60px;top:131.60px;font-size:14.38px;color:#333;letter-spacing:0.038px;-webkit-text-stroke-width:0.55px;">Статусы и история отправки данных в Единую Систему Учета Трудовых Договор по</div>
<div class="t" style="left:385.60px;top:147.50px;font-size:14.38px;color:#333;letter-spacing:0.039px;-webkit-text-stroke-width:0.55px;">сотруднику: Фамилия Имя Отчество</div>
<div class="a" style="left:993px;top:141.5px;width:2.5px;height:2.5px;border-radius:50%;background:#aab2c0;box-shadow:4.5px 0 0 #aab2c0,9px 0 0 #aab2c0"></div>
<div class="a" style="left:385px;top:167px;width:326px;height:337px;background:#f2f2f2;"></div>
<div class="t" style="left:460.40px;top:176.90px;font-size:14.2px;color:#333;-webkit-text-stroke-width:0.1px;">Список действий с ЕСУТД</div>
<div class="a" style="left:392px;top:196.2px;width:239px;height:22.2px;background:#f8f9fc;border:1px solid #e2e7f0;border-radius:3px"></div>
<div class="t" style="left:397.60px;top:203.80px;font-size:9.97px;color:#8c96a8;letter-spacing:-0.020px;-webkit-text-stroke-width:0.1px;">Найти сотрудника</div>
<svg class="a" style="left:616px;top:202px" width="11" height="11" viewBox="0 0 11 11"><circle cx="4.6" cy="4.6" r="3.4" fill="none" stroke="#8a93a6" stroke-width="1.1"/><path d="M7.1 7.1 L10 10" stroke="#8a93a6" stroke-width="1.2"/></svg>
<div class="a" style="left:639.6px;top:196.2px;width:62.6px;height:22.2px;background:#fff;border:1px solid #e2e7f0;border-radius:3px"></div>
<div class="t" style="left:643.80px;top:203.80px;font-size:10.04px;color:#333;letter-spacing:-0.434px;-webkit-text-stroke-width:0.25px;">Все</div>
<svg class="a" style="left:693.5px;top:205px" width="7" height="5"><path d="M0 0 H6.5 L3.25 4Z" fill="#6a7488"/></svg>
<div class="a" style="left:708.3px;top:222.3px;width:3px;height:282px;background:#b0b6c2;"></div>
<div class="a" style="left:708.3px;top:264.3px;width:3px;height:142.4px;background:#1a86ea;"></div>
<div class="a" style="left:392px;top:222.3px;width:312.3px;height:28px;background:#fff;"></div>
<svg class="a" style="left:392.3px;top:224.3px" width="18" height="23.4" viewBox="0 0 18 23.4"><rect width="18" height="23.4" rx="4" fill="#e6ecf9"/><path d="M4 9.4 H14 M4 12.3 H12.5 M4 15.2 H10" stroke="#6e7890" stroke-width="1.4"/><path d="M4 18.1 H6.6 M8.2 18.1 H10.5" stroke="#6e7890" stroke-width="1.4"/></svg>
<div class="t" style="left:418.00px;top:226.10px;font-size:10.09px;color:#2e8ce8;letter-spacing:-0.119px;-webkit-text-stroke-width:0.2px;">Информация об изменений ИИН</div>
<div class="t" style="left:418.00px;top:238.80px;font-size:10.15px;color:#2e8ce8;letter-spacing:-0.084px;-webkit-text-stroke-width:0.2px;">работника</div>
<div class="t" style="left:603.90px;top:232.90px;font-size:10.05px;color:#333;letter-spacing:-0.080px;-webkit-text-stroke-width:0.1px;">01.01.2022</div>
<div class="a" style="left:661px;top:229.3px;width:39.6px;height:14.2px;background:#e31f48;border-radius:3.5px"><svg class="a" style="left:2.8px;top:2.6px" width="9" height="9" viewBox="0 0 9 9"><path d="M1.3 4.6 A3.3 3.3 0 0 1 7.3 2.7 M7.7 4.4 A3.3 3.3 0 0 1 1.7 6.3" fill="none" stroke="#8a0e2c" stroke-width="1.2"/><path d="M6 0.9 L8.2 2.9 L5.6 3.6Z M3 8.1 L0.8 6.1 L3.4 5.4Z" fill="#8a0e2c"/></svg><div class="t" style="left:14.20px;top:4.20px;font-size:7.2px;color:#9a1234;letter-spacing:-0.194px;-webkit-text-stroke-width:0.1px;">ЕСУТД</div>
</div>
<div class="a" style="left:392px;top:249.3px;width:312.3px;height:2px;background:#4a9ee8;"></div>
<svg class="a" style="left:392.3px;top:252.7px" width="18" height="23.4" viewBox="0 0 18 23.4"><rect width="18" height="23.4" rx="4" fill="#e6ecf9"/><path d="M4 9.4 H14 M4 12.3 H12.5 M4 15.2 H10" stroke="#6e7890" stroke-width="1.4"/><path d="M4 18.1 H6.6 M8.2 18.1 H10.5" stroke="#6e7890" stroke-width="1.4"/></svg>
<div class="t" style="left:418.00px;top:254.50px;font-size:10.27px;color:#333;letter-spacing:-0.017px;-webkit-text-stroke-width:0.2px;">Приказ о расторжении трудового</div>
<div class="t" style="left:418.00px;top:267.20px;font-size:10.35px;color:#333;letter-spacing:0.031px;-webkit-text-stroke-width:0.2px;">договора</div>
<div class="t" style="left:603.90px;top:261.30px;font-size:10.05px;color:#333;letter-spacing:-0.080px;-webkit-text-stroke-width:0.1px;">01.01.2022</div>
<div class="a" style="left:661px;top:257.7px;width:39.6px;height:14.2px;background:#fbbc30;border-radius:3.5px"><svg class="a" style="left:2.8px;top:2.6px" width="9" height="9" viewBox="0 0 9 9"><path d="M1.3 4.6 A3.3 3.3 0 0 1 7.3 2.7 M7.7 4.4 A3.3 3.3 0 0 1 1.7 6.3" fill="none" stroke="#6e4c12" stroke-width="1.2"/><path d="M6 0.9 L8.2 2.9 L5.6 3.6Z M3 8.1 L0.8 6.1 L3.4 5.4Z" fill="#6e4c12"/></svg><div class="t" style="left:14.20px;top:4.20px;font-size:7.2px;color:#7a5a22;letter-spacing:-0.194px;-webkit-text-stroke-width:0.1px;">ЕСУТД</div>
</div>
<div class="a" style="left:392px;top:278.6px;width:312.3px;height:1px;background:#e2e2e2;"></div>
<svg class="a" style="left:392.3px;top:281.1px" width="18" height="23.4" viewBox="0 0 18 23.4"><rect width="18" height="23.4" rx="4" fill="#e6ecf9"/><path d="M4 9.4 H14 M4 12.3 H12.5 M4 15.2 H10" stroke="#6e7890" stroke-width="1.4"/><path d="M4 18.1 H6.6 M8.2 18.1 H10.5" stroke="#6e7890" stroke-width="1.4"/></svg>
<div class="t" style="left:418.00px;top:282.90px;font-size:10.23px;color:#333;letter-spacing:-0.032px;-webkit-text-stroke-width:0.2px;">Дополнительное соглашени к</div>
<div class="t" style="left:418.00px;top:295.60px;font-size:10.27px;color:#333;letter-spacing:-0.013px;-webkit-text-stroke-width:0.2px;">трудовому договору</div>
<div class="t" style="left:603.90px;top:289.70px;font-size:10.05px;color:#333;letter-spacing:-0.080px;-webkit-text-stroke-width:0.1px;">01.01.2022</div>
<div class="a" style="left:661px;top:286.1px;width:39.6px;height:14.2px;background:#50b46c;border-radius:3.5px"><svg class="a" style="left:3px;top:3px" width="9" height="8" viewBox="0 0 9 8"><path d="M1 4.3 L3.4 6.5 L8.2 1.6" fill="none" stroke="#fff" stroke-width="1.5"/></svg><div class="t" style="left:14.20px;top:4.20px;font-size:7.2px;color:#a4dcb2;letter-spacing:-0.194px;-webkit-text-stroke-width:0.1px;">ЕСУТД</div>
</div>
<div class="a" style="left:392px;top:307.0px;width:312.3px;height:1px;background:#e2e2e2;"></div>
<svg class="a" style="left:392.3px;top:309.5px" width="18" height="23.4" viewBox="0 0 18 23.4"><rect width="18" height="23.4" rx="4" fill="#e6ecf9"/><path d="M4 9.4 H14 M4 12.3 H12.5 M4 15.2 H10" stroke="#6e7890" stroke-width="1.4"/><path d="M4 18.1 H6.6 M8.2 18.1 H10.5" stroke="#6e7890" stroke-width="1.4"/></svg>
<div class="t" style="left:418.00px;top:318.00px;font-size:10.25px;color:#333;letter-spacing:-0.029px;-webkit-text-stroke-width:0.2px;">Трудовой договор</div>
<div class="t" style="left:603.90px;top:318.10px;font-size:10.05px;color:#333;letter-spacing:-0.080px;-webkit-text-stroke-width:0.1px;">01.01.2022</div>
<div class="a" style="left:661px;top:314.5px;width:39.6px;height:14.2px;background:#50b46c;border-radius:3.5px"><svg class="a" style="left:3px;top:3px" width="9" height="8" viewBox="0 0 9 8"><path d="M1 4.3 L3.4 6.5 L8.2 1.6" fill="none" stroke="#fff" stroke-width="1.5"/></svg><div class="t" style="left:14.20px;top:4.20px;font-size:7.2px;color:#a4dcb2;letter-spacing:-0.194px;-webkit-text-stroke-width:0.1px;">ЕСУТД</div>
</div>
<div class="a" style="left:392px;top:335.4px;width:312.3px;height:1px;background:#e2e2e2;"></div>
<svg class="a" style="left:392.3px;top:337.9px" width="18" height="23.4" viewBox="0 0 18 23.4"><rect width="18" height="23.4" rx="4" fill="#e6ecf9"/><path d="M4 9.4 H14 M4 12.3 H12.5 M4 15.2 H10" stroke="#6e7890" stroke-width="1.4"/><path d="M4 18.1 H6.6 M8.2 18.1 H10.5" stroke="#6e7890" stroke-width="1.4"/></svg>
<div class="t" style="left:418.00px;top:346.40px;font-size:10.23px;color:#333;letter-spacing:-0.033px;-webkit-text-stroke-width:0.2px;">Удаление трудового договора</div>
<div class="t" style="left:603.90px;top:346.50px;font-size:10.05px;color:#333;letter-spacing:-0.080px;-webkit-text-stroke-width:0.1px;">01.01.2022</div>
<div class="a" style="left:661px;top:342.9px;width:39.6px;height:14.2px;background:#50b46c;border-radius:3.5px"><svg class="a" style="left:3px;top:3px" width="9" height="8" viewBox="0 0 9 8"><path d="M1 4.3 L3.4 6.5 L8.2 1.6" fill="none" stroke="#fff" stroke-width="1.5"/></svg><div class="t" style="left:14.20px;top:4.20px;font-size:7.2px;color:#a4dcb2;letter-spacing:-0.194px;-webkit-text-stroke-width:0.1px;">ЕСУТД</div>
</div>
<div class="a" style="left:392px;top:363.8px;width:312.3px;height:1px;background:#e2e2e2;"></div>
<svg class="a" style="left:392.3px;top:366.3px" width="18" height="23.4" viewBox="0 0 18 23.4"><rect width="18" height="23.4" rx="4" fill="#e6ecf9"/><path d="M4 9.4 H14 M4 12.3 H12.5 M4 15.2 H10" stroke="#6e7890" stroke-width="1.4"/><path d="M4 18.1 H6.6 M8.2 18.1 H10.5" stroke="#6e7890" stroke-width="1.4"/></svg>
<div class="t" style="left:418.00px;top:368.10px;font-size:10.28px;color:#333;letter-spacing:-0.008px;-webkit-text-stroke-width:0.2px;">Корректировке данных в трудовом</div>
<div class="t" style="left:418.00px;top:380.80px;font-size:10.35px;color:#333;letter-spacing:0.031px;-webkit-text-stroke-width:0.2px;">договоре</div>
<div class="t" style="left:603.90px;top:374.90px;font-size:10.05px;color:#333;letter-spacing:-0.080px;-webkit-text-stroke-width:0.1px;">01.01.2022</div>
<div class="a" style="left:661px;top:371.3px;width:39.6px;height:14.2px;background:#50b46c;border-radius:3.5px"><svg class="a" style="left:3px;top:3px" width="9" height="8" viewBox="0 0 9 8"><path d="M1 4.3 L3.4 6.5 L8.2 1.6" fill="none" stroke="#fff" stroke-width="1.5"/></svg><div class="t" style="left:14.20px;top:4.20px;font-size:7.2px;color:#a4dcb2;letter-spacing:-0.194px;-webkit-text-stroke-width:0.1px;">ЕСУТД</div>
</div>
<div class="a" style="left:392px;top:392.2px;width:312.3px;height:1px;background:#e2e2e2;"></div>
<svg class="a" style="left:392.3px;top:394.7px" width="18" height="23.4" viewBox="0 0 18 23.4"><rect width="18" height="23.4" rx="4" fill="#e6ecf9"/><path d="M4 9.4 H14 M4 12.3 H12.5 M4 15.2 H10" stroke="#6e7890" stroke-width="1.4"/><path d="M4 18.1 H6.6 M8.2 18.1 H10.5" stroke="#6e7890" stroke-width="1.4"/></svg>
<div class="t" style="left:418.00px;top:403.20px;font-size:10.25px;color:#333;letter-spacing:-0.029px;-webkit-text-stroke-width:0.2px;">Трудовой договор</div>
<div class="t" style="left:603.90px;top:403.30px;font-size:10.05px;color:#333;letter-spacing:-0.080px;-webkit-text-stroke-width:0.1px;">01.01.2022</div>
<div class="a" style="left:661px;top:399.7px;width:39.6px;height:14.2px;background:#50b46c;border-radius:3.5px"><svg class="a" style="left:3px;top:3px" width="9" height="8" viewBox="0 0 9 8"><path d="M1 4.3 L3.4 6.5 L8.2 1.6" fill="none" stroke="#fff" stroke-width="1.5"/></svg><div class="t" style="left:14.20px;top:4.20px;font-size:7.2px;color:#a4dcb2;letter-spacing:-0.194px;-webkit-text-stroke-width:0.1px;">ЕСУТД</div>
</div>
<div class="a" style="left:392px;top:420.6px;width:312.3px;height:1px;background:#e2e2e2;"></div>
<div class="t" style="left:726.20px;top:173.00px;font-size:12.26px;color:#555;letter-spacing:0.034px;-webkit-text-stroke-width:0.1px;">Название:</div>
<div class="t" style="left:792.60px;top:173.00px;font-size:12.97px;color:#333;letter-spacing:0.039px;-webkit-text-stroke-width:0.4px;">Трудовой Договор</div>
<div class="t" style="left:726.00px;top:193.30px;font-size:8.23px;color:#8e99b2;letter-spacing:-0.034px;-webkit-text-stroke-width:0.1px;">CUID: 000000000001</div>
<div class="t" style="left:726.30px;top:214.40px;font-size:12.64px;color:#555;letter-spacing:0.019px;-webkit-text-stroke-width:0.1px;">Дата последней отправки:</div>
<div class="t" style="left:888.90px;top:217.40px;font-size:10.1px;color:#333;letter-spacing:-0.105px;-webkit-text-stroke-width:0.25px;">01.01.2022</div>
<div class="t" style="left:726.00px;top:240.90px;font-size:12.21px;color:#555;-webkit-text-stroke-width:0.1px;">Статус:</div>
<div class="a" style="left:775.2px;top:239.2px;width:39.6px;height:13.8px;background:#e31f48;border-radius:3.5px"><svg class="a" style="left:2.8px;top:2.6px" width="9" height="9" viewBox="0 0 9 9"><path d="M1.3 4.6 A3.3 3.3 0 0 1 7.3 2.7 M7.7 4.4 A3.3 3.3 0 0 1 1.7 6.3" fill="none" stroke="#8a0e2c" stroke-width="1.2"/><path d="M6 0.9 L8.2 2.9 L5.6 3.6Z M3 8.1 L0.8 6.1 L3.4 5.4Z" fill="#8a0e2c"/></svg><div class="t" style="left:14.20px;top:4.20px;font-size:7.2px;color:#9a1234;letter-spacing:-0.194px;-webkit-text-stroke-width:0.1px;">ЕСУТД</div>
</div>
<div class="t" style="left:822.60px;top:242.60px;font-size:10.0px;color:#333;-webkit-text-stroke-width:0.25px;">Возникла ошибка</div>
<div class="t" style="left:726.30px;top:262.00px;font-size:12.23px;color:#555;letter-spacing:0.020px;-webkit-text-stroke-width:0.1px;">Информация:</div>
<div class="a" style="left:726.2px;top:281px;width:289.8px;height:99px;background:#fcd4dd;border-radius:2.5px;"></div>
<div class="t" style="left:731.60px;top:286.80px;font-size:10.1px;color:#3d3d3d;letter-spacing:-0.407px;-webkit-text-stroke-width:0.1px;">Ошибка SCSE145:</div>
<div class="t" style="left:731.60px;top:305.80px;font-size:10.15px;color:#3d3d3d;letter-spacing:-0.028px;-webkit-text-stroke-width:0.1px;">У работника с новым ИИН числится другой предыдущий</div>
<div class="t" style="left:731.60px;top:317.90px;font-size:10.11px;color:#3d3d3d;letter-spacing:-0.042px;-webkit-text-stroke-width:0.1px;">ИИН. Пожалуйста обратитесь к разработчикам ЕСУТД</div>
<div class="t" style="left:731.60px;top:336.80px;font-size:10.1px;color:#3d3d3d;letter-spacing:-0.407px;-webkit-text-stroke-width:0.1px;">Ошибка SCSE131:</div>
<div class="t" style="left:731.60px;top:354.40px;font-size:10.13px;color:#3d3d3d;letter-spacing:-0.035px;-webkit-text-stroke-width:0.1px;">Значение поля "Дата первого рабочего дня" не должна</div>
<div class="t" style="left:731.60px;top:366.50px;font-size:10.11px;color:#3d3d3d;letter-spacing:-0.041px;-webkit-text-stroke-width:0.1px;">быть позднее 50 лет от текущей даты</div>
<div class="a" style="left:776.6px;top:388.6px;width:188.5px;height:27.2px;background:#0b74de;border-radius:14px;"></div>
<div class="t" style="left:788.30px;top:397.00px;font-size:11.64px;color:#fff;letter-spacing:-0.030px;-webkit-text-stroke-width:0.1px;">Перейти в карточку документа</div>
<div class="a" style="left:785px;top:423.8px;width:172.5px;height:27.6px;background:#ececec;border-radius:14px;"></div>
<div class="t" style="left:797.20px;top:433.00px;font-size:11.48px;color:#c5cbd6;letter-spacing:-0.115px;-webkit-text-stroke-width:0.1px;">Отправить данные в ЕСУТД</div>
<div class="a" style="left:783px;top:459px;width:176px;height:28.2px;background:#ececec;border-radius:14px;"></div>
<div class="t" style="left:795.30px;top:468.60px;font-size:11.57px;color:#c5cbd6;letter-spacing:-0.070px;-webkit-text-stroke-width:0.1px;">Удалить документ из ЕСУТД</div>
<div class="a" style="left:0px;top:0px;width:1024px;height:1px;background:#2d96f0;"></div>
<div class="a" style="left:0px;top:0px;width:2px;height:504px;background:#3aa0f5;"></div>
<div class="a" style="left:1022px;top:0px;width:2px;height:504px;background:#3aa0f5;"></div>
</div>
</body></html>
